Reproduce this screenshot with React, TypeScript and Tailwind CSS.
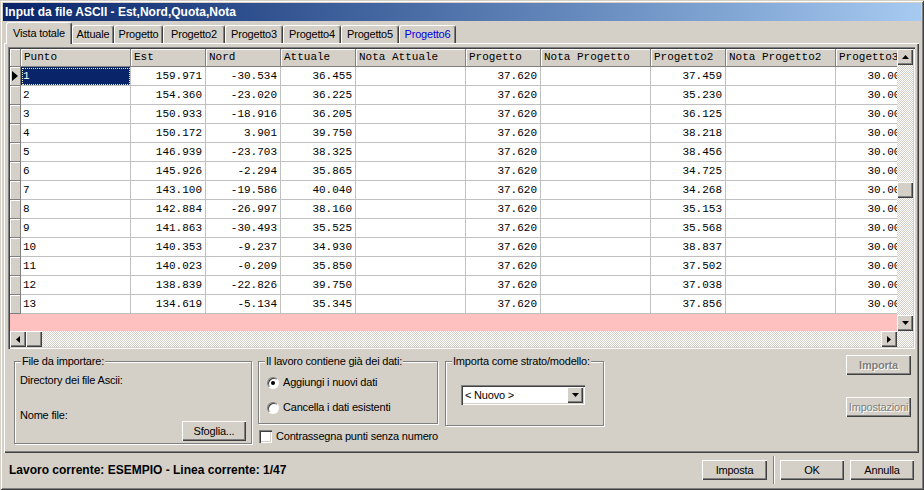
import React from "react";

const SANS = "font-['Liberation_Sans',Arial,sans-serif]";
const MONO = "font-['Liberation_Mono','Courier_New',monospace]";
const RAISED =
  "bg-[#d4d0c8] shadow-[inset_1px_1px_#ffffff,inset_-1px_-1px_#404040,inset_-2px_-2px_#808080]";
const SUNKEN =
  "shadow-[inset_1px_1px_#808080,inset_2px_2px_#404040,inset_-1px_-1px_#ffffff,inset_-2px_-2px_#d4d0c8]";
const CHECKER =
  "bg-[#d4d0c8] bg-[image:repeating-conic-gradient(#d4d0c8_0%_25%,#ffffff_0%_50%)] bg-[length:2px_2px]";

type Dir = "up" | "down" | "left" | "right";

// small black arrow used by scrollbars and the combo box
function Arrow({ dir }: { dir: Dir }) {
  if (dir === "up")
    return (
      <svg width="7" height="4" viewBox="0 0 7 4">
        <polygon points="3.5,0 7,4 0,4" fill="#000" />
      </svg>
    );
  if (dir === "down")
    return (
      <svg width="7" height="4" viewBox="0 0 7 4">
        <polygon points="0,0 7,0 3.5,4" fill="#000" />
      </svg>
    );
  if (dir === "left")
    return (
      <svg width="4" height="7" viewBox="0 0 4 7">
        <polygon points="4,0 4,7 0,3.5" fill="#000" />
      </svg>
    );
  return (
    <svg width="4" height="7" viewBox="0 0 4 7">
      <polygon points="0,0 0,7 4,3.5" fill="#000" />
    </svg>
  );
}

function ScrollBtn({ dir }: { dir: Dir }) {
  return (
    <div className={`w-[16px] h-[16px] shrink-0 flex items-center justify-center ${RAISED}`}>
      <Arrow dir={dir} />
    </div>
  );
}

const COLS = [
  { h: "Punto", w: "w-[110px]", num: false },
  { h: "Est", w: "w-[75px]", num: true },
  { h: "Nord", w: "w-[75px]", num: true },
  { h: "Attuale", w: "w-[75px]", num: true },
  { h: "Nota Attuale", w: "w-[110px]", num: false },
  { h: "Progetto", w: "w-[75px]", num: true },
  { h: "Nota Progetto", w: "w-[110px]", num: false },
  { h: "Progetto2", w: "w-[75px]", num: true },
  { h: "Nota Progetto2", w: "w-[110px]", num: false },
  { h: "Progetto3", w: "w-[75px]", num: true },
];

const DATA = [
  ["1", "159.971", "-30.534", "36.455", "37.459"],
  ["2", "154.360", "-23.020", "36.225", "35.230"],
  ["3", "150.933", "-18.916", "36.205", "36.125"],
  ["4", "150.172", "3.901", "39.750", "38.218"],
  ["5", "146.939", "-23.703", "38.325", "38.456"],
  ["6", "145.926", "-2.294", "35.865", "34.725"],
  ["7", "143.100", "-19.586", "40.040", "34.268"],
  ["8", "142.884", "-26.997", "38.160", "35.153"],
  ["9", "141.863", "-30.493", "35.525", "35.568"],
  ["10", "140.353", "-9.237", "34.930", "38.837"],
  ["11", "140.023", "-0.209", "35.850", "37.502"],
  ["12", "138.839", "-22.826", "39.750", "37.038"],
  ["13", "134.619", "-5.134", "35.345", "37.856"],
];

const TABS = [
  { t: "Attuale", w: "w-[42px]", blue: false },
  { t: "Progetto", w: "w-[49px]", blue: false },
  { t: "Progetto2", w: "w-[62px]", blue: false },
  { t: "Progetto3", w: "w-[58px]", blue: false },
  { t: "Progetto4", w: "w-[58px]", blue: false },
  { t: "Progetto5", w: "w-[58px]", blue: false },
  { t: "Progetto6", w: "w-[57px]", blue: true },
];

function Grid() {
  return (
    <div className={`mt-[4px] ml-[4px] w-[907px] h-[302px] shrink-0 p-[2px] flex flex-col ${SUNKEN}`}>
      <div className="flex h-[282px]">
        {/* BEGIN: data area */}
        <div className={`flex-1 min-w-0 overflow-hidden flex flex-col ${MONO} text-[11px] tracking-normal`}>
          <div className="flex h-[18px] shrink-0">
            <div className="w-[11px] shrink-0 bg-[#d4d0c8] border-r border-b border-[#808080] shadow-[inset_1px_1px_#ffffff]" />
            {COLS.map((c) => (
              <div
                key={c.h}
                className={`${c.w} shrink-0 bg-[#d4d0c8] border-r border-b border-[#808080] shadow-[inset_1px_1px_#ffffff] pl-[3px] flex items-center whitespace-nowrap overflow-hidden`}
              >
                {c.h}
              </div>
            ))}
          </div>
          {DATA.map((r, i) => {
            const vals = [r[0], r[1], r[2], r[3], "", "37.620", "", r[4], "", "30.000"];
            return (
              <div key={r[0]} className="flex h-[19px] shrink-0">
                <div className="w-[11px] shrink-0 bg-[#d4d0c8] border-r border-b border-[#808080] shadow-[inset_1px_1px_#ffffff] flex items-center justify-center">
                  {i === 0 && (
                    <svg width="6" height="10" viewBox="0 0 6 10">
                      <polygon points="0,0 6,5 0,10" fill="#000" />
                    </svg>
                  )}
                </div>
                {COLS.map((c, j) => {
                  const sel = i === 0 && j === 0;
                  return (
                    <div
                      key={c.h}
                      className={`${c.w} shrink-0 border-r border-b border-[#c0c0c0] flex items-center whitespace-nowrap overflow-hidden ${
                        c.num ? "justify-end pr-[3px]" : "pl-[2px]"
                      } ${sel ? "bg-[#0a246a] text-white outline-1 outline-dotted outline-[#f0f0c0] -outline-offset-2" : "bg-white"}`}
                    >
                      {vals[j]}
                    </div>
                  );
                })}
              </div>
            );
          })}
          <div className="flex-1 bg-[#ffc0c0]" />
        </div>
        {/* END: data area */}
        <div className="w-[16px] shrink-0 flex flex-col">
          <ScrollBtn dir="up" />
          <div className={`flex-1 flex flex-col ${CHECKER}`}>
            <div className="h-[117px] shrink-0" />
            <div className={`h-[16px] shrink-0 ${RAISED}`} />
          </div>
          <ScrollBtn dir="down" />
        </div>
      </div>
      <div className="flex h-[16px] shrink-0">
        <ScrollBtn dir="left" />
        <div className={`w-[16px] h-[16px] shrink-0 ${RAISED}`} />
        <div className={`flex-1 ${CHECKER}`} />
        <ScrollBtn dir="right" />
        <div className={`w-[16px] shrink-0 ${CHECKER}`} />
      </div>
    </div>
  );
}

function Button({
  label,
  w,
  disabled,
  bold,
}: {
  label: string;
  w: string;
  disabled?: boolean;
  bold?: boolean;
}) {
  return (
    <div
      className={`${w} h-[20px] shrink-0 flex items-center justify-center whitespace-nowrap overflow-hidden ${RAISED} ${
        disabled ? "text-[#808080] [text-shadow:1px_1px_0_#ffffff]" : "text-black"
      } ${bold ? "font-bold" : ""}`}
    >
      {label}
    </div>
  );
}

function Radio({ checked }: { checked?: boolean }) {
  return (
    <div className="w-[12px] h-[12px] shrink-0 rounded-full bg-white border border-t-[#808080] border-l-[#808080] border-r-white border-b-white shadow-[inset_1px_1px_#404040] flex items-center justify-center">
      {checked && <div className="w-[4px] h-[4px] rounded-full bg-black" />}
    </div>
  );
}

const FIELDSET = "border border-[#808080] shadow-[inset_1px_1px_#ffffff,1px_1px_#ffffff] flex flex-col min-w-0";
const LEGEND = "ml-[6px] px-[1px] leading-[13px] bg-[#d4d0c8]";

function BottomArea() {
  return (
    <div className="flex items-start mt-[6px] pl-[10px] pr-[8px]">
      {/* BEGIN: File da importare */}
      <fieldset className={`w-[238px] ${FIELDSET}`}>
        <legend className={LEGEND}>File da importare:</legend>
        <div className="pl-[5px] mt-[6px] leading-[13px]">Directory dei file Ascii:</div>
        <div className="pl-[5px] mt-[22px] leading-[13px]">Nome file:</div>
        <div className="flex justify-end pr-[5px] pb-[2px] -mt-px">
          <Button label="Sfoglia..." w="w-[64px]" />
        </div>
      </fieldset>
      {/* END: File da importare */}
      <div className="w-[180px] ml-[6px] flex flex-col shrink-0">
        <fieldset className={FIELDSET}>
          <legend className={LEGEND}>Il lavoro contiene già dei dati:</legend>
          <div className="flex items-center h-[13px] pl-[8px] mt-[8px]">
            <Radio checked />
            <span className="ml-[4px] leading-[13px]">Aggiungi i nuovi dati</span>
          </div>
          <div className="flex items-center h-[13px] pl-[8px] mt-[12px] mb-[9px]">
            <Radio />
            <span className="ml-[4px] leading-[13px]">Cancella i dati esistenti</span>
          </div>
        </fieldset>
        <div className="flex items-center mt-[6px] ml-px">
          <div className={`w-[13px] h-[13px] shrink-0 bg-white ${SUNKEN}`} />
          <span className="ml-[4px] leading-[13px] whitespace-nowrap">Contrassegna punti senza numero</span>
        </div>
      </div>
      <fieldset className={`w-[159px] ml-[7px] shrink-0 ${FIELDSET}`}>
        <legend className={LEGEND}>Importa come strato/modello:</legend>
        <div className={`mt-[17px] ml-[15px] mb-[20px] w-[124px] h-[20px] bg-white p-[2px] flex items-center ${SUNKEN}`}>
          <span className="flex-1 pl-[2px] leading-[13px]">&lt; Nuovo &gt;</span>
          <div className={`w-[16px] h-[16px] shrink-0 flex items-center justify-center ${RAISED}`}>
            <Arrow dir="down" />
          </div>
        </div>
      </fieldset>
      <div className="ml-auto w-[65px] flex flex-col gap-[22px] shrink-0">
        <Button label="Importa" w="w-[65px]" disabled bold />
        <Button label="Impostazioni" w="w-[65px]" disabled />
      </div>
    </div>
  );
}

function App() {
  return (
    <div
      className={`w-[924px] h-[490px] bg-[#d4d0c8] p-[3px] flex flex-col overflow-hidden ${SANS} text-[11px] tracking-[-0.2px] text-black shadow-[inset_1px_1px_#d4d0c8,inset_-1px_-1px_#404040,inset_2px_2px_#ffffff,inset_-2px_-2px_#808080]`}
    >
      {/* BEGIN: Title bar */}
      <div className="h-[18px] shrink-0 bg-linear-to-r from-[#0a246a] to-[#a6caf0] flex items-center pl-[2px] text-white font-bold text-[12px] tracking-normal whitespace-nowrap">
        Input da file ASCII - Est,Nord,Quota,Nota
      </div>
      {/* END: Title bar */}
      <div className="h-[22px] shrink-0 flex items-end pl-[3px] relative z-10">
        <div className="w-[66px] h-[22px] -mb-px shrink-0 flex items-center justify-center bg-[#d4d0c8] rounded-t-[3px] border-t border-l border-r border-t-white border-l-white border-r-[#404040] shadow-[inset_-1px_0_#808080]">
          Vista totale
        </div>
        {TABS.map((t) => (
          <div
            key={t.t}
            className={`${t.w} h-[18px] shrink-0 flex items-center justify-center rounded-t-[3px] border-t border-l border-r border-t-white border-l-white border-r-[#404040] shadow-[inset_-1px_0_#808080] ${
              t.blue ? "text-[#0000e0]" : ""
            }`}
          >
            {t.t}
          </div>
        ))}
      </div>
      {/* BEGIN: Tab panel */}
      <div className="h-[410px] shrink-0 ml-px mr-[2px] flex flex-col shadow-[inset_1px_1px_#ffffff,inset_-1px_-1px_#404040,inset_-2px_-2px_#808080]">
        <Grid />
        <BottomArea />
      </div>
      {/* END: Tab panel */}
      <div className="flex-1 flex items-center pl-[6px] pr-[7px]">
        <span className="font-bold text-[12px] tracking-normal whitespace-nowrap">
          Lavoro corrente: ESEMPIO - Linea corrente: 1/47
        </span>
        <div className="ml-auto flex items-center">
          <Button label="Imposta" w="w-[65px]" />
          <div className="ml-[6px] w-[2px] h-[28px] border-l border-r border-l-[#808080] border-r-white" />
          <Button label="OK" w="w-[64px] ml-[5px]" />
          <Button label="Annulla" w="w-[64px] ml-[6px]" />
        </div>
      </div>
    </div>
  );
}

export default App;
